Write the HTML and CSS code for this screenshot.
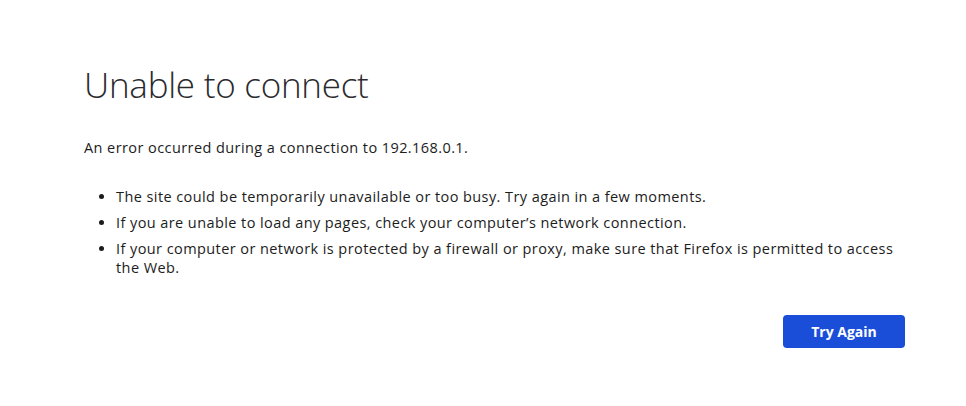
FILE: index.html
```html
<!DOCTYPE html>
<html>
<head>
<meta charset="utf-8">
<link rel="stylesheet" href="styles.css">
</head>
<body>
<main class="container">
  <h1 class="title">Unable to connect</h1>
  <p class="desc">An error occurred during a connection to 192.168.0.1.</p>
  <ul class="list">
    <li>The site could be temporarily unavailable or too busy. Try again in a few moments.</li>
    <li>If you are unable to load any pages, check your computer’s network connection.</li>
    <li>If your computer or network is protected by a firewall or proxy, make sure that Firefox is permitted to access the Web.</li>
  </ul>
  <div class="actions">
    <button class="btn">Try Again</button>
  </div>
</main>
</body>
</html>
```
FILE: styles.css
```css
html, body {
  margin: 0;
  padding: 0;
  background: #fff;
}
body {
  font-family: "Open Sans", "Noto Sans", sans-serif;
  color: #1c1c1c;
}
.container {
  width: 821px;
  padding: 57px 0 0 84px;
}
.title {
  margin: 0;
  font-weight: 300;
  font-size: 35px;
  line-height: 56px;
  color: #2a2a2e;
  letter-spacing: -0.25px;
}
.desc {
  margin: 25px 0 0;
  font-size: 14.5px;
  font-weight: 500;
  line-height: 19px;
  letter-spacing: 0.42px;
}
.list {
  margin: 30px 0 0;
  padding-left: 32px;
  font-size: 14.5px;
  font-weight: 500;
  line-height: 19px;
  letter-spacing: 0.42px;
}
.list li {
  margin-bottom: 7px;
}
.list li:last-child {
  margin-bottom: 0;
}
.actions {
  display: flex;
  justify-content: flex-end;
  margin-top: 38px;
}
.btn {
  width: 122px;
  height: 33px;
  border: none;
  border-radius: 4px;
  background: #1a4ed8;
  color: #fff;
  font-family: "Open Sans", "Noto Sans", sans-serif;
  font-weight: 700;
  font-size: 14px;
}
```
